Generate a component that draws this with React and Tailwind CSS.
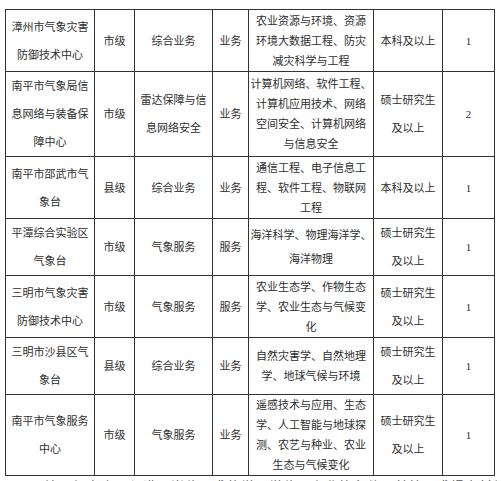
import React from "react";

const rows = [
  { h: "h-[62px]", c: [["漳州市气象灾害", "防御技术中心"], ["市级"], ["综合业务"], ["业务"], ["农业资源与环境、资源", "环境大数据工程、防灾", "减灾科学与工程"], ["本科及以上"], ["1"]] },
  { h: "h-[85px]", c: [["南平市气象局信", "息网络与装备保", "障中心"], ["市级"], ["雷达保障与信", "息网络安全"], ["业务"], ["计算机网络、软件工程、", "计算机应用技术、网络", "空间安全、计算机网络", "与信息安全"], ["硕士研究生", "及以上"], ["2"]] },
  { h: "h-[62px]", c: [["南平市邵武市气", "象台"], ["县级"], ["综合业务"], ["业务"], ["通信工程、电子信息工", "程、软件工程、物联网", "工程"], ["本科及以上"], ["1"]] },
  { h: "h-[57px]", lh5: true, c: [["平潭综合实验区", "气象台"], ["市级"], ["气象服务"], ["服务"], ["海洋科学、物理海洋学、", "海洋物理"], ["硕士研究生", "及以上"], ["1"]] },
  { h: "h-[62px]", c: [["三明市气象灾害", "防御技术中心"], ["市级"], ["气象服务"], ["服务"], ["农业生态学、作物生态", "学、农业生态与气候变", "化"], ["硕士研究生", "及以上"], ["1"]] },
  { h: "h-[57px]", c: [["三明市沙县区气", "象台"], ["县级"], ["综合业务"], ["业务"], ["自然灾害学、自然地理", "学、地球气候与环境"], ["硕士研究生", "及以上"], ["1"]] },
  { h: "h-[81px]", c: [["南平市气象服务", "中心"], ["市级"], ["气象服务"], ["业务"], ["遥感技术与应用、生态", "学、人工智能与地球探", "测、农艺与种业、农业", "生态与气候变化"], ["硕士研究生", "及以上"], ["1"]] },
];

const widths = ["w-[89px]", "w-[40px]", "w-[78px]", "w-[36px]", "w-[125px]", "w-[69px]", "w-[52px]"];

export default function App() {
  return (
    <div className="w-[502px] h-[481px] overflow-hidden bg-white text-[#2e2e2e] font-['Liberation_Serif','Noto_Sans_CJK_SC',serif]">
      <div className="pt-[9px] pl-[5px]">
        <table className="table-fixed border-collapse w-[490px]">
          <colgroup>
            {widths.map((w, i) => (
              <col key={i} className={w} />
            ))}
          </colgroup>
          <tbody>
            {rows.map((r, ri) => (
              <tr key={ri} className={r.h}>
                {r.c.map((lines, ci) => (
                  <td
                    key={ci}
                    className={
                      "border border-[#333] p-0 text-center align-middle text-[11px] whitespace-nowrap " +
                      (ci === 4 ? (r.lh5 ? "leading-[24px]" : "leading-[20px]") : "leading-[28px]")
                    }
                  >
                    {lines.map((l, li) => (
                      <div key={li}>{l}</div>
                    ))}
                  </td>
                ))}
              </tr>
            ))}
          </tbody>
        </table>
        <p className="mt-[1px] pl-[40px] text-[13px] leading-[20px] tracking-[1px] text-[#555] whitespace-nowrap">
          注：报考人员须满足岗位要求的学历学位、专业等条件，并按要求提交材料。
        </p>
      </div>
    </div>
  );
}
